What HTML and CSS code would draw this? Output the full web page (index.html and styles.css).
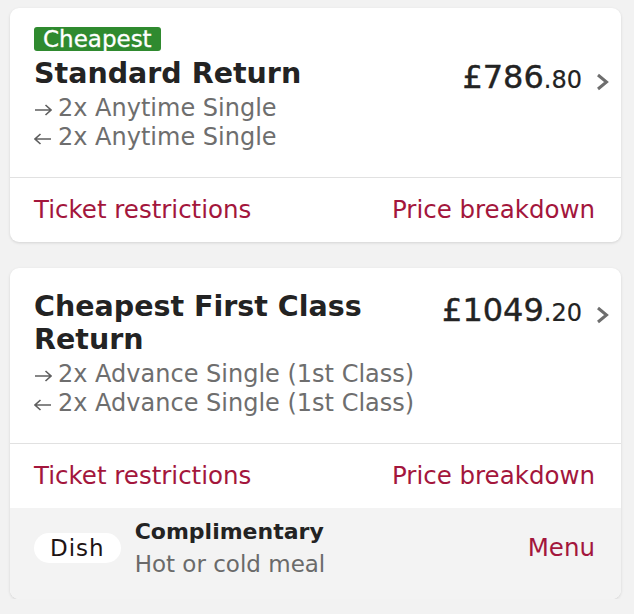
FILE: index.html
```html
<!DOCTYPE html>
<html lang="en">
<head>
<meta charset="utf-8">
<title>Fares</title>
<link rel="stylesheet" href="styles.css">
</head>
<body>
<div class="list">
  <section class="card">
    <div class="card-main">
      <span class="badge">Cheapest</span>
      <div class="head">
        <div class="info">
          <h2 class="title">Standard Return</h2>
          <div class="legs">
            <div class="leg"><svg class="arrow" viewBox="0 0 18 12" width="18" height="12"><path d="M1 6H17M11.5 1L17 6L11.5 11"/></svg><span>2x Anytime Single</span></div>
            <div class="leg"><svg class="arrow" viewBox="0 0 18 12" width="18" height="12"><path d="M17 6H1M6.5 1L1 6L6.5 11"/></svg><span>2x Anytime Single</span></div>
          </div>
        </div>
        <div class="price-wrap">
          <span class="price"><span class="pounds">£786</span><span class="pence">.80</span></span>
          <svg class="chev" viewBox="0 0 13 18" width="13" height="18"><path d="M2 2L10.5 9L2 16"/></svg>
        </div>
      </div>
    </div>
    <div class="links">
      <a class="link">Ticket restrictions</a>
      <a class="link">Price breakdown</a>
    </div>
  </section>

  <section class="card">
    <div class="card-main">
      <div class="head">
        <div class="info">
          <h2 class="title">Cheapest First Class Return</h2>
          <div class="legs">
            <div class="leg"><svg class="arrow" viewBox="0 0 18 12" width="18" height="12"><path d="M1 6H17M11.5 1L17 6L11.5 11"/></svg><span>2x Advance Single (1st Class)</span></div>
            <div class="leg"><svg class="arrow" viewBox="0 0 18 12" width="18" height="12"><path d="M17 6H1M6.5 1L1 6L6.5 11"/></svg><span>2x Advance Single (1st Class)</span></div>
          </div>
        </div>
        <div class="price-wrap">
          <span class="price"><span class="pounds">£1049</span><span class="pence">.20</span></span>
          <svg class="chev" viewBox="0 0 13 18" width="13" height="18"><path d="M2 2L10.5 9L2 16"/></svg>
        </div>
      </div>
    </div>
    <div class="links">
      <a class="link">Ticket restrictions</a>
      <a class="link">Price breakdown</a>
    </div>
    <div class="meal">
      <span class="pill">Dish</span>
      <div class="meal-text">
        <div class="meal-name">Complimentary</div>
        <div class="meal-desc">Hot or cold meal</div>
      </div>
      <a class="link">Menu</a>
    </div>
  </section>
</div>
</body>
</html>
```

FILE: styles.css
```css
* { box-sizing: border-box; }

html, body {
  margin: 0;
  padding: 0;
  background: #f2f2f2;
}

body {
  font-family: "DejaVu Sans", "Liberation Sans", sans-serif;
  color: #232323;
}

.list {
  padding: 8px 13px 0 10px;
  display: flex;
  flex-direction: column;
  gap: 26px;
}

.card {
  background: #ffffff;
  border-radius: 9px;
  box-shadow: 0 1px 3px rgba(0, 0, 0, 0.13);
  overflow: hidden;
}

.card-main {
  padding: 19px 12px 25px 24px;
  border-bottom: 1px solid #e1e1e1;
  display: flex;
  flex-direction: column;
  align-items: flex-start;
}

.badge {
  display: inline-block;
  background: #2f8a2f;
  color: #ffffff;
  font-size: 23px;
  line-height: 24px;
  height: 24px;
  padding: 0 9px;
  border-radius: 3px;
  margin-bottom: 3px;
  -webkit-text-stroke: 0.3px #ffffff;
}

.head {
  display: flex;
  align-items: flex-start;
  width: 100%;
  margin-top: 3px;
  gap: 16px;
}

.info {
  flex: 1;
  min-width: 0;
}

.title {
  margin: 0;
  font-size: 28.5px;
  line-height: 33px;
  font-weight: bold;
  color: #232323;
}

.legs {
  margin-top: 4px;
  color: #6e6e6e;
  font-size: 24px;
  line-height: 29px;
}

.leg {
  display: flex;
  align-items: center;
  gap: 6px;
  white-space: nowrap;
}

.arrow {
  flex: none;
  margin-top: 3px;
  fill: none;
  stroke: #5f5f5f;
  stroke-width: 1.6;
}

.price-wrap {
  flex: none;
  display: flex;
  align-items: center;
  gap: 14px;
  padding-top: 4px;
}

.price {
  line-height: 33px;
  white-space: nowrap;
  color: #232323;
}

.pounds {
  font-size: 32px;
  -webkit-text-stroke: 0.4px #232323;
}

.pence {
  font-size: 24px;
  -webkit-text-stroke: 0.2px #232323;
}

.chev {
  margin-top: 3px;
  fill: none;
  stroke: #6e6e6e;
  stroke-width: 3;
}

.links {
  height: 64px;
  padding: 0 26px 0 24px;
  display: flex;
  align-items: center;
  justify-content: space-between;
}

.link {
  color: #a3163c;
  font-size: 24.5px;
  line-height: 30px;
}

.meal {
  background: #f3f3f3;
  padding: 7px 26px 18px 24px;
  display: flex;
  align-items: center;
}

.pill {
  flex: none;
  background: #ffffff;
  color: #1e1414;
  font-size: 23px;
  letter-spacing: 1px;
  height: 30px;
  line-height: 30px;
  padding: 0 16px;
  border-radius: 15px;
  margin-right: 14px;
  margin-top: -1px;
}

.meal-text {
  flex: 1;
}

.meal-name {
  font-size: 22px;
  line-height: 33px;
  font-weight: bold;
  color: #232323;
}

.meal-desc {
  font-size: 23px;
  line-height: 33px;
  color: #6a6a6a;
}
```
